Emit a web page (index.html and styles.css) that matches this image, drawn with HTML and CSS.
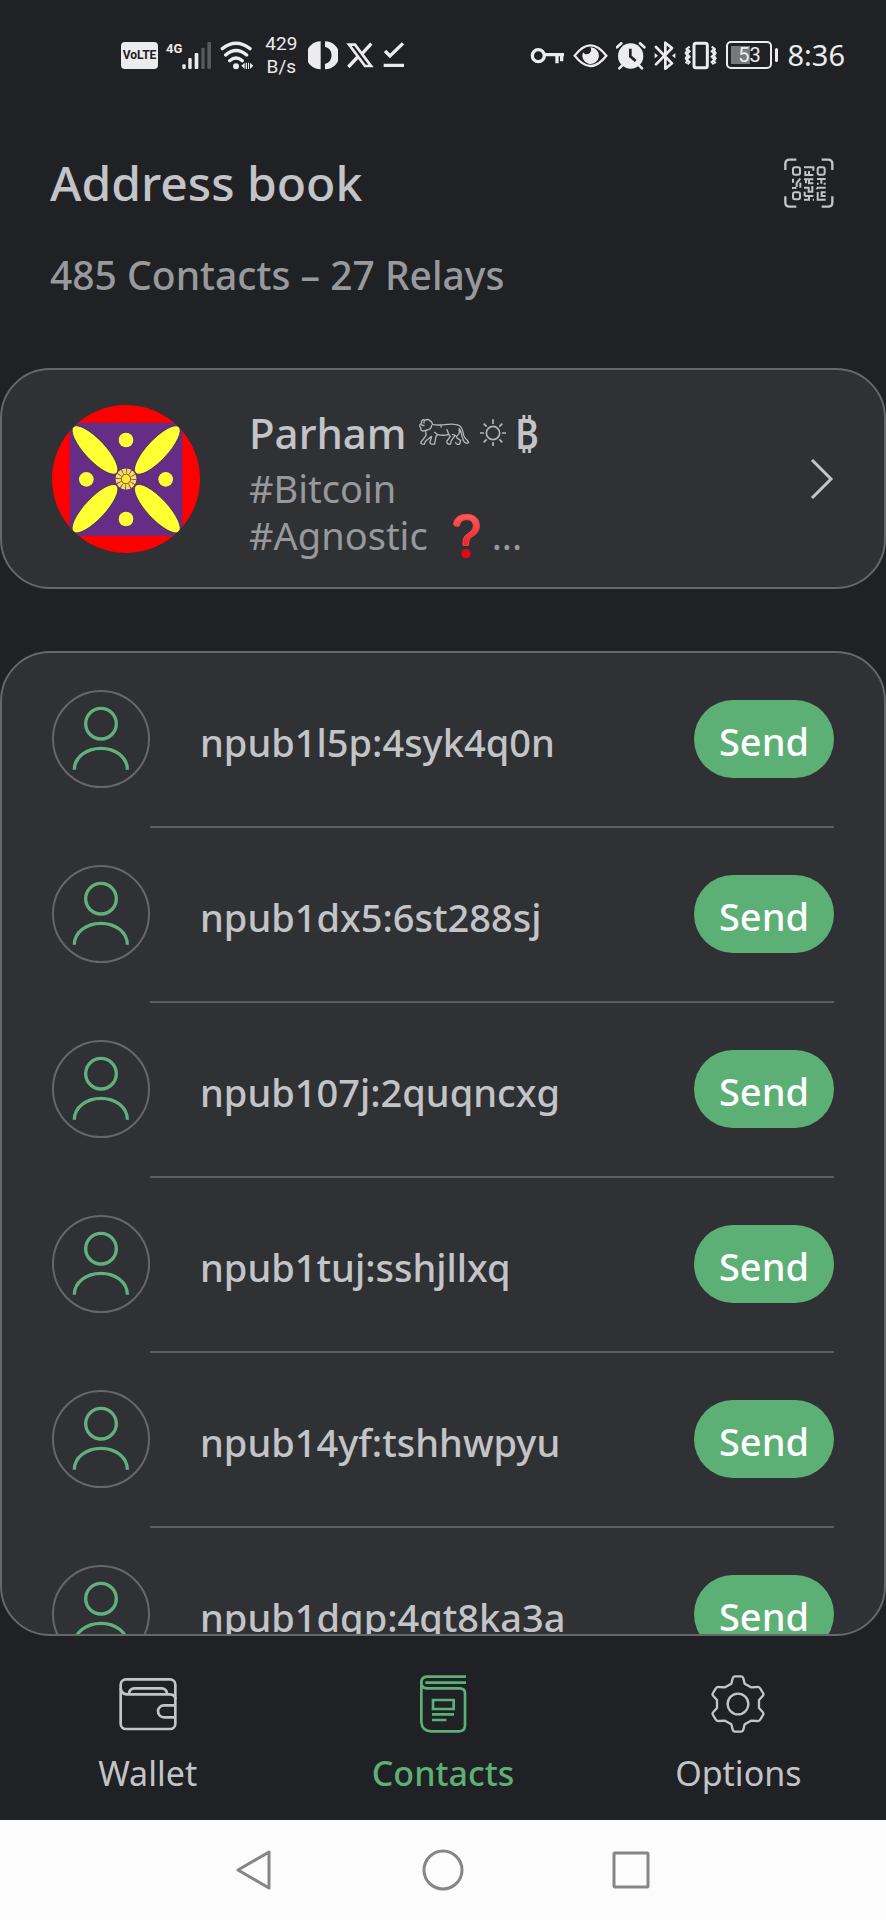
FILE: index.html
```html
<!DOCTYPE html>
<html lang="en">
<head>
<meta charset="utf-8">
<meta name="viewport" content="width=device-width, initial-scale=1">
<title>Address book</title>
<link rel="stylesheet" href="styles.css">
</head>
<body class="phone">
<svg class="defs" aria-hidden="true">
  <symbol id="person" viewBox="156 153 294 294">
    <circle cx="303" cy="300" r="144" fill="none" stroke="#66676b" stroke-width="6"/>
    <g fill="none" stroke="#62b07e" stroke-width="10"><circle cx="303" cy="254" r="46"/><path d="M223 392C223 354 260 328 303 328S382 354 382 392"/></g>
  </symbol>
</svg>

<div class="status">
  <div class="status-group">
    <span class="volte">VoLTE</span>
    <span class="mobile">
      <span class="network">4G</span>
      <svg width="30" height="29" viewBox="246 57 90 87"><g fill="#ececee"><rect x="247" y="127" width="10" height="14" rx="3"/><rect x="265" y="108" width="10" height="33" rx="3"/><rect x="284" y="93" width="11" height="48" rx="3"/></g><g fill="#58595c"><rect x="304" y="77" width="10" height="64" rx="3"/><rect x="322" y="60" width="11" height="81" rx="3"/></g></svg>
    </span>
    <svg width="34" height="29" viewBox="357 57 102 87"><g fill="none" stroke="#ececee" stroke-width="10" stroke-linecap="round"><path d="M364 80Q405 48 447 80M374 99Q405 72 437 99M386 116Q405 100 424 116"/></g><g fill="#ececee"><circle cx="405" cy="133" r="9"/><path d="M421 131l10-9v19zM457 131l-10-9v19z"/><path d="M434 122h4v19h-4zM441 122h3v19h-3z"/></g></svg>
    <span class="speed">429<br>B/s</span>
    <svg width="30" height="29" viewBox="621 61 90 87"><path fill="#ececee" d="M659 62V146A43 42 0 0 1 659 62ZM672 62A43 42 0 0 1 672 146V130A27 27 0 0 0 672 78Z"/></svg>
    <svg width="28" height="29" viewBox="735 61 84 87"><g fill="none" stroke="#ececee" stroke-width="8"><path d="M744 72H762L810 136H792Z"/><path stroke-width="10" d="M811 69L784 98M742 139L770 109"/></g></svg>
    <svg width="24" height="29" viewBox="853 61 72 87"><path fill="none" stroke="#ececee" stroke-width="10" d="M862 91L877 106L916 68M858 134H919"/></svg>
  </div>
  <div class="status-group">
    <svg width="35" height="29" viewBox="51 60 105 87"><g fill="none" stroke="#ececee" stroke-width="10"><circle cx="76" cy="104" r="18"/><path d="M95 101H153M146 101V121M132 101V127"/></g></svg>
    <svg width="35" height="29" viewBox="181 60 105 87"><path d="M186 104Q233 42 281 104Q233 166 186 104Z" fill="none" stroke="#ececee" stroke-width="7"/><path fill="#ececee" d="M233 79A25 25 0 1 1 211 94A12 12 0 1 0 233 79Z"/></svg>
    <svg width="30" height="29" viewBox="312 60 90 87"><circle cx="356" cy="105" r="38" fill="#ececee"/><path d="M330 134L322 142M382 134L390 142M315 79L328 67M384 67L397 79" stroke="#ececee" stroke-width="8" stroke-linecap="round"/><path d="M355 83V106L371 120" fill="none" stroke="#202125" stroke-width="8"/></svg>
    <svg width="22" height="29" viewBox="426 60 66 87"><path d="M432 78L480 127L460 143V65L480 81L432 130" fill="none" stroke="#ececee" stroke-width="8" stroke-linejoin="round" stroke-linecap="round"/><path d="M428 96l10 8-10 8zM490 96l-10 8 10 8z" fill="#ececee"/></svg>
    <svg width="34" height="29" viewBox="513 60 102 87"><g fill="none" stroke="#ececee"><rect x="543" y="67" width="40" height="73" rx="6" stroke-width="9"/><path stroke-width="6" d="M530 77l-8 6 8 8-8 8 8 8-8 8 8 8-6 7M519 82l4 6-5 8 5 8-5 8 5 8-5 7M596 77l8 6-8 8 8 8-8 8 8 8-8 8 6 7M607 82l-4 6 5 8-5 8 5 8-5 8 5 7"/></g></svg>
    <span class="battery"><span class="battery-level">53</span></span>
    <time class="clock">8:36</time>
  </div>
</div>

<header class="header">
  <div class="title-row">
    <h1 class="title">Address book</h1>
    <button class="plain" aria-label="Scan QR code">
      <svg width="50" height="50" viewBox="67 48 150 150"><g fill="none" stroke="#c3c4c8" stroke-width="7"><path d="M71 84V66Q71 53 84 53H104M180 53H199Q212 53 212 66V84M212 163V181Q212 194 199 194H180M104 194H84Q71 194 71 181V163"/></g><g fill="none" stroke="#c3c4c8" stroke-width="6"><rect x="94" y="76" width="21" height="22" rx="6"/><rect x="168" y="76" width="21" height="22" rx="6"/><rect x="94" y="151" width="21" height="21" rx="6"/><path d="M127 76H155V86M131 87V99H155M142 87V99M94 110V122M105 123L116 110M105 122V135M116 122V137M91 138H104M127 112H155M142 112V124H155M133 112V124M127 137H141V149H155M152 132V149M129 149V162M129 162H155M142 162V173H127M153 173H157M166 111H192M179 111V125M166 125H171M186 125H192M166 137H192M166 137V142M192 151H180V162H192M168 150V173H192"/></g></svg>
    </button>
  </div>
  <p class="summary">485 Contacts – 27 Relays</p>
</header>

<main class="main">
  <a class="card profile" href="#profile">
    <svg class="profile-photo" viewBox="155 135 444 444" role="img" aria-label="Profile picture">
      <clipPath id="round"><circle cx="377" cy="357" r="222"/></clipPath>
      <g clip-path="url(#round)">
        <path fill="#fe0000" d="M155 135h444v444H155z"/><path fill="#662d87" d="M208 188h338v339H208z"/>
        <g fill="#ffff33" stroke="#33204a" stroke-width="2">
          <ellipse cx="284" cy="270" rx="95" ry="31" transform="rotate(47 284 270)"/><ellipse cx="471" cy="270" rx="95" ry="31" transform="rotate(-47 471 270)"/>
          <ellipse cx="284" cy="446" rx="95" ry="31" transform="rotate(-47 284 446)"/><ellipse cx="471" cy="446" rx="95" ry="31" transform="rotate(47 471 446)"/>
        </g>
        <g fill="#ffff33"><circle cx="377" cy="240" r="22"/><circle cx="377" cy="477" r="22"/><circle cx="258" cy="358" r="22"/><circle cx="496" cy="358" r="22"/></g>
        <circle cx="377" cy="357" r="23" fill="none" stroke="#f5dc62" stroke-width="17"/>
        <circle cx="377" cy="357" r="23" fill="none" stroke="#5b3a35" stroke-width="17" stroke-dasharray="2 10"/>
        <circle cx="377" cy="357" r="14" fill="#ffe92f" stroke="#6b4a2a" stroke-width="2"/>
      </g>
    </svg>
    <span class="profile-text">
      <span class="profile-name"><span>Parham</span>
        <svg class="lion" width="52" height="30" viewBox="566 90 156 90" role="img" aria-label="Lion"><path fill="none" stroke="#b4b5ba" stroke-width="4" stroke-linejoin="round" stroke-linecap="round" d="M573 101Q577 92 583 97Q592 92 598 97Q605 101 607 109C630 115 652 106 672 109C690 109 696 119 698 132Q700 149 711 157L715 163Q710 169 702 162C693 150 695 130 687 122M573 101Q576 106 568 111Q568 117 572 120Q569 127 578 129L586 127L587 143L572 162Q570 169 582 169L586 159L604 145L599 162Q598 170 613 168L616 150Q617 143 622 140Q642 144 655 139L660 145L650 159Q648 169 660 169L663 158L672 145M666 140Q677 140 680 150L691 157L688 168Q678 171 676 164M604 112Q602 125 589 126M630 111L633 117M581 100V105M574 111L581 113M622 140L613 133M655 139L650 125M686 123Q690 137 680 144"/></svg>
        <svg width="28" height="30" viewBox="741 97 84 90" role="img" aria-label="Sun"><g fill="none" stroke="#b4b5ba" stroke-width="5"><circle cx="783" cy="142" r="20"/><path d="M783 101V115M783 169V181M744 142H756M810 142H822M755 114L764 123M811 114L802 123M755 170L764 161M811 170L802 161"/></g></svg>
        <span>₿</span>
      </span>
      <span class="profile-about">#Bitcoin</span>
      <span class="profile-about"><span>#Agnostic</span>
        <svg class="question" width="28" height="46" viewBox="668 364 84 138" role="img" aria-label="Question mark"><defs><linearGradient id="red" x2="0" y2="1"><stop stop-color="#ff5a58"/><stop offset="1" stop-color="#ea252b"/></linearGradient></defs><path d="M673 396C676 377 692 368 713 368C736 368 750 382 750 402C750 424 735 430 726 437C718 443 718 450 718 461H701C700 443 703 435 714 427C724 420 732 414 732 402C732 391 724 384 712 384C699 384 692 392 690 403Q673 406 673 396Z" fill="url(#red)" stroke="#f6444a" stroke-width="3"/><circle cx="710" cy="486" r="14" fill="#dd0b12"/></svg>
        <span>...</span>
      </span>
    </span>
    <svg width="24" height="42" viewBox="0 0 24 42" aria-hidden="true"><path d="M2 2L21 21L2 40" fill="none" stroke="#c3c4c8" stroke-width="3"/></svg>
  </a>

  <ul class="card contacts">
    <li class="contact"><svg class="avatar"><use href="#person"/></svg><span class="contact-name">npub1l5p:4syk4q0n</span><button class="send">Send</button></li>
    <li class="contact"><svg class="avatar"><use href="#person"/></svg><span class="contact-name">npub1dx5:6st288sj</span><button class="send">Send</button></li>
    <li class="contact"><svg class="avatar"><use href="#person"/></svg><span class="contact-name">npub107j:2quqncxg</span><button class="send">Send</button></li>
    <li class="contact"><svg class="avatar"><use href="#person"/></svg><span class="contact-name">npub1tuj:sshjllxq</span><button class="send">Send</button></li>
    <li class="contact"><svg class="avatar"><use href="#person"/></svg><span class="contact-name">npub14yf:tshhwpyu</span><button class="send">Send</button></li>
    <li class="contact"><svg class="avatar"><use href="#person"/></svg><span class="contact-name">npub1dqp:4qt8ka3a</span><button class="send">Send</button></li>
  </ul>
</main>

<nav class="tabs">
  <a class="tab" href="#wallet">
    <svg width="60" height="60" viewBox="353 402 180 180"><g fill="none" stroke="#c3c4c8" stroke-width="8"><rect x="361" y="418" width="164" height="149" rx="16"/><path d="M361 444Q363 463 380 463H508Q525 463 525 478M386 461Q388 445 402 445H484Q498 445 500 461M525 496H491A18 18 0 0 0 491 532H525"/></g></svg>
    <span>Wallet</span>
  </a>
  <a class="tab tab-active" href="#contacts" aria-current="page">
    <svg width="60" height="60" viewBox="1239 402 180 180"><g fill="none" stroke="currentColor" stroke-width="8"><path d="M1398 410H1281Q1264 411 1264 428V546Q1266 574 1295 574H1377Q1395 574 1395 556V460Q1395 445 1379 445H1281Q1264 444 1264 428M1276 428H1398"/><path d="M1299 480H1361V507H1299ZM1296 523H1362M1296 540H1339"/></g></svg>
    <span>Contacts</span>
  </a>
  <a class="tab" href="#options">
    <svg width="60" height="60" viewBox="796 402 180 180"><g fill="none" stroke="#c3c4c8" stroke-width="7" stroke-linejoin="round"><circle cx="886" cy="492" r="31"/><path d="M876 409H896Q900 409 902 415L906 431L925 442L943 441Q949 440 953 446L961 459Q964 464 960 468L949 480V504L960 516Q964 520 961 525L953 538Q949 544 943 543L925 542L906 553L902 569Q900 575 896 575H876Q872 575 870 569L866 553L847 542L829 543Q823 544 819 538L811 525Q808 520 812 516L823 504V480L812 468Q808 464 811 459L819 446Q823 440 829 441L847 442L866 431L870 415Q872 409 876 409Z"/></g></svg>
    <span>Options</span>
  </a>
</nav>

<div class="system-bar">
  <button class="plain" aria-label="Back"><svg width="42" height="42" viewBox="0 0 42 42"><path d="M35 3V39L4 21Z" fill="none" stroke="#868686" stroke-width="3" stroke-linejoin="round"/></svg></button>
  <button class="plain" aria-label="Home"><svg width="42" height="42" viewBox="0 0 42 42"><circle cx="21" cy="21" r="19" fill="none" stroke="#868686" stroke-width="3"/></svg></button>
  <button class="plain" aria-label="Recent apps"><svg width="42" height="42" viewBox="0 0 42 42"><rect x="4" y="4" width="34" height="34" rx="1" fill="none" stroke="#868686" stroke-width="3"/></svg></button>
</div>
</body>
</html>
```
FILE: styles.css
```css
* { box-sizing: border-box; }

.phone {
  margin: 0;
  height: 100vh;
  display: flex;
  flex-direction: column;
  background: #202125;
  color: #c3c4c8;
  font-family: "Noto Sans", sans-serif;
}

.phone svg { display: block; flex: none; }
.phone .defs { position: absolute; width: 0; height: 0; }

.plain {
  padding: 0;
  border: 0;
  background: none;
}

/* Status bar */
.status {
  height: 110px;
  padding: 0 41px 0 121px;
  display: flex;
  align-items: center;
  justify-content: space-between;
  color: #ececee;
  font-family: Roboto, sans-serif;
}

.status-group {
  display: flex;
  align-items: center;
  gap: 8px;
}

.volte {
  width: 37px;
  border-radius: 4px;
  background: #ececee;
  color: #202125;
  font-size: 12px;
  font-weight: bold;
  line-height: 27px;
  text-align: center;
}

.mobile { display: flex; align-items: flex-start; }

.network {
  font-size: 13px;
  font-weight: bold;
  line-height: 16px;
}

.speed {
  padding: 0 3px;
  font-size: 19px;
  line-height: 23px;
  text-align: center;
}

.battery {
  position: relative;
  width: 46px;
  height: 28px;
  margin-right: 7px;
  padding: 3px;
  border: 2px solid #ececee;
  border-radius: 5px;
}

.battery::after {
  content: "";
  position: absolute;
  top: 5px;
  right: -8px;
  width: 3px;
  height: 14px;
  border-radius: 2px;
  background: #ececee;
}

.battery-level {
  display: block;
  background: linear-gradient(to right, #77787a 53%, transparent 53%);
  font-size: 20px;
  line-height: 18px;
  text-align: center;
}

.clock {
  font-family: "Noto Sans", sans-serif;
  font-size: 29px;
  line-height: 32px;
}

/* Header */
.header { padding: 43px 52px 69px 50px; }

.title-row {
  display: flex;
  align-items: center;
  justify-content: space-between;
}

.title {
  margin: 0;
  font-size: 48px;
  font-weight: 500;
  line-height: 60px;
}

.summary {
  margin: 38px 0 0;
  color: #98999d;
  font-size: 39px;
  font-weight: 500;
  line-height: 48px;
}

/* Cards */
.main {
  flex: 1;
  min-height: 0;
  display: flex;
  flex-direction: column;
  gap: 62px;
}

.card {
  border: 2px solid #66676b;
  border-radius: 50px;
  background: #303135;
}

.profile {
  padding: 28px 50px;
  display: flex;
  align-items: center;
  gap: 49px;
  color: inherit;
  text-decoration: none;
}

.profile-photo { width: 148px; height: 148px; }

.profile-text {
  flex: 1;
  padding-top: 7px;
}

.profile-name,
.profile-about {
  display: flex;
  align-items: center;
}

.profile-name {
  gap: 8px;
  margin-bottom: 4px;
  font-size: 42px;
  font-weight: 500;
  line-height: 56px;
}

.lion { margin-left: 4px; }

.profile-about {
  gap: 12px;
  color: #98999d;
  font-size: 38px;
  line-height: 47px;
}

.question { margin-left: 12px; }

.contacts {
  flex: 1;
  min-height: 0;
  margin: 0;
  padding: 0 50px;
  overflow: hidden;
  list-style: none;
}

.contact {
  display: grid;
  grid-template-columns: 98px 1fr auto;
  align-items: center;
  column-gap: 50px;
  padding-top: 37px;
}

.contact::after {
  content: "";
  grid-column: 1 / -1;
  height: 2px;
  margin: 38px 0 0 98px;
  background: #5c5d61;
}

.avatar { width: 98px; height: 98px; }

.contact-name {
  padding-top: 6px;
  font-size: 38px;
  font-weight: 500;
  line-height: 48px;
}

.send {
  width: 140px;
  height: 78px;
  padding: 4px 0 0;
  border: 0;
  border-radius: 39px;
  background: #5db075;
  color: #fff;
  font-family: inherit;
  font-size: 38px;
  font-weight: 500;
  line-height: 48px;
}

/* Tab bar */
.tabs {
  display: grid;
  grid-template-columns: repeat(3, 1fr);
  padding: 38px 0 25px;
}

.tab {
  display: flex;
  flex-direction: column;
  align-items: center;
  gap: 17px;
  color: #c3c4c8;
  font-size: 34px;
  line-height: 44px;
  text-decoration: none;
}

.tab-active {
  color: #5db075;
  font-weight: 500;
}

.system-bar {
  height: 100px;
  display: flex;
  align-items: center;
  justify-content: center;
  gap: 146px;
  background: #fcfcfc;
}
```
